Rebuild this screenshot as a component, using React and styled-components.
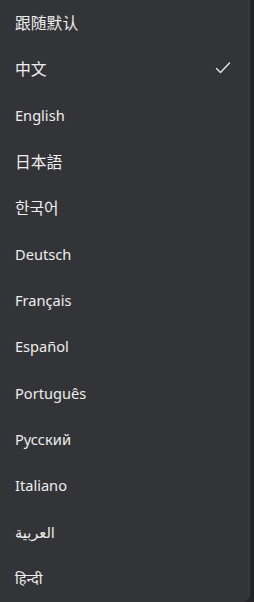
import React from "react";
import styled, { createGlobalStyle } from "styled-components";

const Global = createGlobalStyle`
  html, body { margin: 0; padding: 0; background: #242426; }
  body { font-family: "Noto Sans", "Open Sans", "Noto Sans CJK SC", "DejaVu Sans", sans-serif; }
`;

const Panel = styled.div`
  width: 250px;
  height: 603px;
  background: #333437;
  border-right: 1px solid #3b3c3f;
  border-bottom-right-radius: 8px;
  box-sizing: border-box;
  overflow: hidden;
  margin-top: -1px;
`;

const Row = styled.div`
  height: 46.33px;
  display: flex;
  align-items: center;
  justify-content: space-between;
  padding: 0 18px 0 15px;
  color: #eeeeee;
  font-size: 14.6px;
`;

const Label = styled.span`
  font-family: ${(p) =>
    p.$cjk
      ? `"Noto Sans CJK SC", "Noto Sans", sans-serif`
      : `"Noto Sans", "Noto Sans CJK SC", "DejaVu Sans", sans-serif`};
  font-size: ${(p) => (p.$cjk ? "15.8px" : "14.6px")};
`;

const Check = () => (
  <svg width="16" height="14" viewBox="0 0 16 14">
    <polyline
      points="1.5,7.5 5.5,11.5 14.5,2"
      fill="none"
      stroke="#e6e6e6"
      strokeWidth="1.4"
      strokeLinecap="round"
      strokeLinejoin="round"
    />
  </svg>
);

const langs = [
  { t: "跟随默认", cjk: true },
  { t: "中文", cjk: true, sel: true },
  { t: "English" },
  { t: "日本語", cjk: true },
  { t: "한국어", cjk: true },
  { t: "Deutsch" },
  { t: "Français" },
  { t: "Español" },
  { t: "Português" },
  { t: "Русский" },
  { t: "Italiano" },
  { t: "العربية" },
  { t: "हिन्दी" },
];

export default function App() {
  return (
    <>
      <Global />
      <Panel>
        {langs.map((l) => (
          <Row key={l.t}>
            <Label $cjk={l.cjk}>{l.t}</Label>
            {l.sel && <Check />}
          </Row>
        ))}
      </Panel>
    </>
  );
}
